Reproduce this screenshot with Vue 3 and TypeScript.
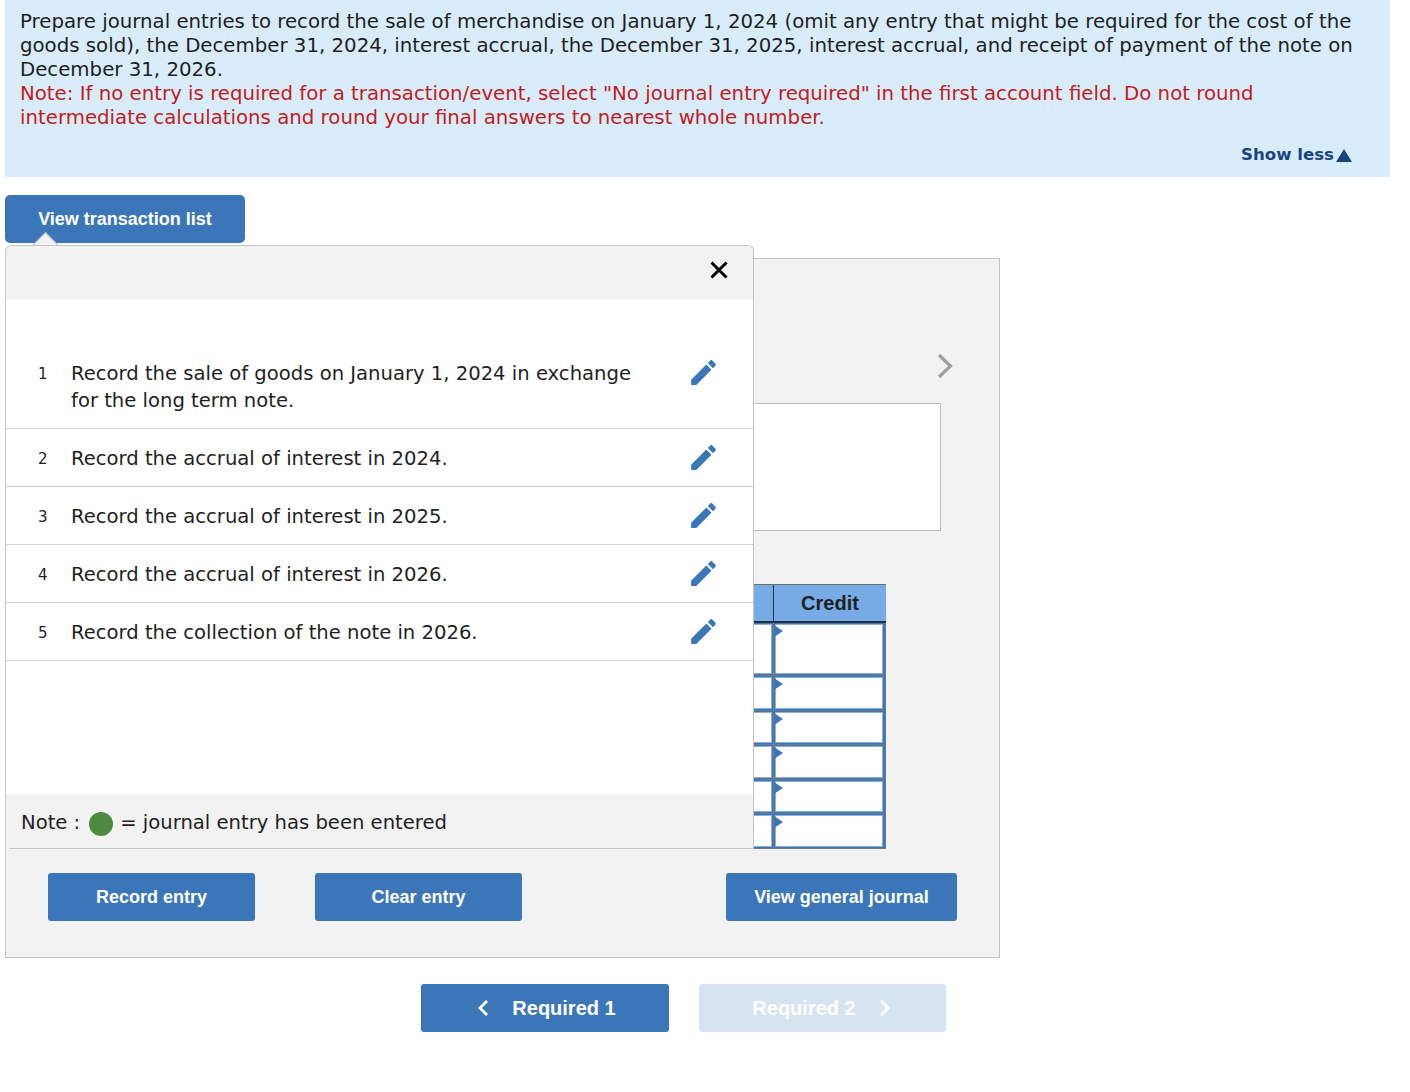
<script setup lang="ts">
interface Step {
  no: number
  text: string
}

const steps: Step[] = [
  { no: 1, text: 'Record the sale of goods on January 1, 2024 in exchange for the long term note.' },
  { no: 2, text: 'Record the accrual of interest in 2024.' },
  { no: 3, text: 'Record the accrual of interest in 2025.' },
  { no: 4, text: 'Record the accrual of interest in 2026.' },
  { no: 5, text: 'Record the collection of the note in 2026.' }
]

const rows = [1, 2, 3, 4, 5, 6]
</script>

<template>
  <div class="page">
    <section class="question">
      <p>
        Prepare journal entries to record the sale of merchandise on January 1, 2024 (omit any entry that might be required for the cost of the goods sold), the December 31, 2024, interest accrual, the December 31, 2025, interest accrual, and receipt of payment of the note on December 31, 2026.
      </p>
      <p class="note-red">
        Note: If no entry is required for a transaction/event, select "No journal entry required" in the first account field. Do not round intermediate calculations and round your final answers to nearest whole number.
      </p>
      <div class="show-less">Show less<span class="up"></span></div>
    </section>

    <div class="work">
      <button class="btn list-btn">View transaction list</button>

      <div class="panel">
        <div class="chevron-row">
          <svg width="16" height="26" viewBox="0 0 16 26">
            <path d="M2 2 L13.500 13 L2 24" fill="none" stroke="#a0a0a0" stroke-width="3.200" />
          </svg>
        </div>
        <div class="desc-box"></div>

        <div class="journal">
          <div class="j-head">
            <div class="j-cell"></div>
            <div class="j-cell credit">Credit</div>
          </div>
          <div v-for="r in rows" :key="r" class="j-row" :class="{ tall: r === 1 }">
            <div class="j-input"></div>
            <div class="j-input"><span class="flag"></span></div>
          </div>
        </div>

        <div class="actions">
          <button class="btn">Record entry</button>
          <button class="btn">Clear entry</button>
          <button class="btn general">View general journal</button>
        </div>
      </div>

      <div class="popover">
        <span class="arrow"></span>
        <div class="pop-inner">
          <div class="pop-head">
            <svg width="18" height="18" viewBox="0 0 18 18">
              <path d="M1.500 1.500 L16.500 16.500 M16.500 1.500 L1.500 16.500" stroke="#000" stroke-width="3" fill="none" />
            </svg>
          </div>
          <ul class="steps">
            <li v-for="s in steps" :key="s.no" class="step" :class="{ first: s.no === 1 }">
              <span class="num">{{ s.no }}</span>
              <span class="label">{{ s.text }}</span>
              <svg class="pencil" width="33" height="33" viewBox="0 0 24 24">
                <path fill="#3b76b9" d="M3 17.250V21h3.750L17.810 9.940l-3.750-3.750L3 17.250zM20.710 7.040c.39-.39.39-1.020 0-1.410l-2.340-2.340c-.39-.39-1.020-.39-1.410 0l-1.830 1.830 3.750 3.750 1.830-1.830z" />
              </svg>
            </li>
          </ul>
          <div class="legend">
            <span>Note :</span>
            <span class="dot"></span>
            <span>= journal entry has been entered</span>
          </div>
        </div>
      </div>
    </div>

    <nav class="pager">
      <button class="btn page-btn prev">
        <svg width="12" height="18" viewBox="0 0 12 18">
          <path d="M10 2 L3 9 L10 16" fill="none" stroke="#fff" stroke-width="2.800" />
        </svg>
        Required 1
      </button>
      <button class="btn page-btn disabled">
        Required 2
        <svg width="12" height="18" viewBox="0 0 12 18">
          <path d="M2 2 L9 9 L2 16" fill="none" stroke="#fff" stroke-width="2.800" />
        </svg>
      </button>
    </nav>
  </div>
</template>

<style>
html,
body {
  background: #fff;
}
</style>

<style scoped>
.page {
  width: 1410px;
  height: 1092px;
  overflow: hidden;
  font-family: "DejaVu Sans", Verdana, sans-serif;
  color: #1f1f1f;
}

.question {
  box-sizing: border-box;
  width: 1385px;
  height: 177px;
  margin-left: 5px;
  padding: 10px 30px 0 15px;
  background: #d9ecfb;
  font-size: 19.750px;
  line-height: 24px;
}

.question p {
  margin: 0;
}

.note-red {
  color: #c21d1d;
}

.show-less {
  display: flex;
  justify-content: flex-end;
  align-items: center;
  margin-top: 13px;
  margin-right: 8px;
  font-size: 16.600px;
  font-weight: 700;
  color: #18457f;
}

.up {
  width: 0;
  height: 0;
  margin-left: 2px;
  border-left: 8px solid transparent;
  border-right: 8px solid transparent;
  border-bottom: 13px solid #18457f;
}

.work {
  position: relative;
  width: 995px;
  margin-left: 5px;
  padding-top: 18px;
}

.btn {
  display: inline-flex;
  align-items: center;
  justify-content: center;
  height: 48px;
  padding: 0;
  border: 0;
  border-radius: 3px;
  background: #3b76b9;
  color: #fff;
  font-family: "Liberation Sans", Arial, sans-serif;
  font-size: 18px;
  font-weight: 700;
}

.list-btn {
  display: flex;
  width: 240px;
  border-radius: 5px;
}

.panel {
  box-sizing: border-box;
  height: 700px;
  margin-top: 15px;
  padding: 0 42px;
  border: 1px solid #c4c4c4;
  background: #f2f2f2;
}

.chevron-row {
  display: flex;
  justify-content: flex-end;
  height: 26px;
  margin-right: 4px;
  margin-top: 94px;
}

.desc-box {
  box-sizing: border-box;
  height: 128px;
  margin-top: 24px;
  margin-right: 16px;
  border: 1px solid #bdbdbd;
  background: #fff;
}

.journal {
  height: 265px;
  margin-top: 53px;
  margin-right: 71px;
}

.j-head {
  display: grid;
  grid-template-columns: 1fr 113px;
  box-sizing: border-box;
  height: 39px;
  border-top: 1px solid #6e6e6e;
  border-bottom: 2px solid #23303d;
  background: #76abe6;
}

.j-cell {
  display: flex;
  align-items: center;
  justify-content: center;
}

.credit {
  border-left: 1px solid #23303d;
  font-family: "Liberation Sans", Arial, sans-serif;
  font-size: 20px;
  font-weight: 700;
  color: #222;
}

.j-row {
  display: grid;
  grid-template-columns: 1fr 111px;
  gap: 1px;
  box-sizing: border-box;
  height: 34.500px;
  padding: 0 1px 1px 0;
  background: #6f7a86;
}

.j-row.tall {
  height: 53px;
}

.j-input {
  position: relative;
  box-sizing: border-box;
  border: 1px solid #3b76b9;
  box-shadow: inset 0 0 0 1px #8cb0d8;
  background: #fff;
}

.j-input:last-child {
  border-right-width: 2px;
}

.flag {
  position: absolute;
  top: 1px;
  left: -1px;
  width: 0;
  height: 0;
  border-top: 6px solid transparent;
  border-bottom: 6px solid transparent;
  border-left: 9px solid #3b76b9;
}

.actions {
  display: flex;
  gap: 60px;
  margin-top: 24px;
}

.actions .btn {
  width: 207px;
}

.actions .general {
  width: 231px;
  margin-left: auto;
}

.popover {
  position: absolute;
  top: 68px;
  left: 0;
  width: 749px;
  height: 604px;
}

.arrow {
  position: absolute;
  top: -9px;
  left: 31px;
  width: 17px;
  height: 17px;
  border: 1px solid #bdbdbd;
  background: #f2f2f2;
  transform: rotate(45deg);
}

.pop-inner {
  position: relative;
  display: flex;
  flex-direction: column;
  box-sizing: border-box;
  height: 100%;
  border: 1px solid #c4c4c4;
  border-bottom: 0;
  border-radius: 6px 6px 0 0;
  background: #fff;
}

.pop-head {
  display: flex;
  justify-content: flex-end;
  align-items: center;
  box-sizing: border-box;
  height: 53px;
  padding-right: 25px;
  padding-bottom: 5px;
  border-radius: 6px 6px 0 0;
  background: #f2f2f2;
}

.steps {
  flex: 1;
  margin: 0;
  padding: 0;
  list-style: none;
}

.step {
  display: flex;
  align-items: center;
  box-sizing: border-box;
  height: 58px;
  padding-left: 32px;
  padding-right: 33px;
  border-bottom: 1px solid #cfcfcf;
  font-size: 19.600px;
  line-height: 27px;
}

.step.first {
  align-items: flex-start;
  height: 130px;
  padding-top: 61px;
}

.num {
  width: 33px;
  padding-top: 4px;
  font-size: 15px;
}

.first .num {
  padding-top: 1px;
}

.label {
  width: 570px;
  margin-top: 2px;
}

.first .label {
  margin-top: 0;
}

.pencil {
  flex: none;
  margin-left: auto;
}

.first .pencil {
  margin-top: -4px;
}

.legend {
  position: relative;
  display: flex;
  align-items: center;
  box-sizing: border-box;
  height: 55px;
  padding-top: 2px;
  padding-left: 15px;
  background: #f2f2f2;
  font-size: 19.600px;
}

.legend::after {
  content: '';
  position: absolute;
  left: 4px;
  right: 0;
  bottom: 0;
  height: 1px;
  background: #c4c4c4;
}

.dot {
  width: 24px;
  height: 24px;
  margin: 2px 7px 0 9px;
  border-radius: 50%;
  background: #4e8a41;
}

.pager {
  display: flex;
  gap: 30px;
  margin-top: 26px;
  margin-left: 421px;
}

.page-btn {
  gap: 23px;
  width: 248px;
  font-size: 20px;
}

.page-btn.prev {
  padding-left: 3px;
}

.page-btn.disabled {
  width: 247px;
  padding-right: 2px;
  background: #d8e3f1;
}
</style>
